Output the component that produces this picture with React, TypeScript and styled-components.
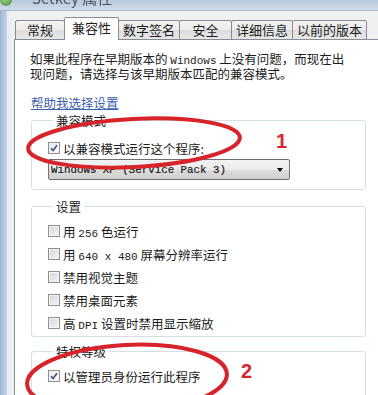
import React from 'react';
import styled, { createGlobalStyle } from 'styled-components';

const GlobalStyle = createGlobalStyle`
  html, body {
    margin: 0;
    padding: 0;
    background: #f0f0f0;
  }
  body {
    font-family: "Noto Sans CJK SC", "Noto Sans", sans-serif;
    color: #1e1e1e;
  }
`;

const tabs = [
  { label: '常规', width: 50 },
  { label: '兼容性', width: 55, active: true },
  { label: '数字签名', width: 62 },
  { label: '安全', width: 53 },
  { label: '详细信息', width: 62 },
  { label: '以前的版本', width: 75 },
];

const CheckIcon = () => (
  <svg width="8" height="8" viewBox="0 0 8 8">
    <path d="M1 4.2 L3.1 6.4 L7 1.2" fill="none" stroke="#3f5180" strokeWidth="1.6" />
  </svg>
);

const CheckRow = ({ checked, children }: { checked?: boolean; children: React.ReactNode }) => (
  <Row>
    <Box $checked={checked}>{checked && <CheckIcon />}</Box>
    <span>{children}</span>
  </Row>
);

const App = () => {
  return (
    <Window>
      <GlobalStyle />
      <TitleBar>
        <AppIcon />
        <Title>Setkey 属性</Title>
      </TitleBar>
      <Body>
        <Frame />
        <Dialog>
          <TabStrip>
            {tabs.map((t) => (
              <Tab key={t.label} $active={t.active} $width={t.width}>
                {t.label}
              </Tab>
            ))}
          </TabStrip>
          <Panel>
            <Intro>
              如果此程序在早期版本的 <Latin>Windows</Latin> 上没有问题，而现在出
              <br />
              现问题，请选择与该早期版本匹配的兼容模式。
            </Intro>
            <HelpLink>帮助我选择设置</HelpLink>

            <Group $top={13} $bottom={9} $gap={3} $space={5}>
              <legend>兼容模式</legend>
              <CheckRow checked>以兼容模式运行这个程序:</CheckRow>
              <Select>
                <SelectText>Windows XP (Service Pack 3)</SelectText>
                <Arrow />
              </Select>
            </Group>

            <Group $top={10} $bottom={5} $gap={7} $space={10}>
              <legend>设置</legend>
              <CheckRow>
                用 <Latin>256</Latin> 色运行
              </CheckRow>
              <CheckRow>
                用 <Latin>640 x 480</Latin> 屏幕分辨率运行
              </CheckRow>
              <CheckRow>禁用视觉主题</CheckRow>
              <CheckRow>禁用桌面元素</CheckRow>
              <CheckRow>
                高 <Latin>DPI</Latin> 设置时禁用显示缩放
              </CheckRow>
            </Group>

            <Group $top={10} $bottom={20} $gap={7} $space={8}>
              <legend>特权等级</legend>
              <CheckRow checked>以管理员身份运行此程序</CheckRow>
            </Group>
          </Panel>
        </Dialog>
      </Body>

      <Marks width="378" height="395" viewBox="0 0 378 395">
        <ellipse cx="134" cy="143" rx="106" ry="24" transform="rotate(-3 134 143)" />
        <ellipse cx="127" cy="379" rx="100" ry="34" transform="rotate(-3 127 379)" />
        <text x="276" y="148">1</text>
        <text x="241" y="378">2</text>
      </Marks>
    </Window>
  );
};

export default App;

const Window = styled.div`
  position: relative;
  width: 378px;
  height: 395px;
  overflow: hidden;
  display: flex;
  flex-direction: column;
  background: #f0f0f0;
`;

const TitleBar = styled.div`
  height: 10px;
  flex: none;
  display: flex;
  align-items: flex-start;
  gap: 20px;
  overflow: hidden;
  background: linear-gradient(180deg, #b8c9dc, #cfdbe8);
  border-bottom: 1px solid #a9b9cc;
`;

const AppIcon = styled.div`
  width: 12px;
  height: 12px;
  margin-top: -6px;
  border-radius: 50%;
  background: radial-gradient(circle at 40% 40%, #9fd38c, #3e8a3a);
`;

const Title = styled.div`
  font-size: 15px;
  line-height: 14px;
  margin-top: -9px;
  color: #4b5564;
  white-space: nowrap;
  filter: blur(0.7px);
`;

const Body = styled.div`
  flex: 1;
  display: flex;
  min-height: 0;
`;

const Frame = styled.div`
  width: 7px;
  flex: none;
  background: linear-gradient(90deg, #9db5d3, #c5d4e6);
  border-right: 2px solid #e6ecf3;
`;

const Dialog = styled.div`
  flex: 1;
  display: flex;
  flex-direction: column;
  padding: 7px 0 0 5px;
  overflow: hidden;
`;

const TabStrip = styled.div`
  display: flex;
  align-items: flex-end;
  height: 22px;
  padding-left: 1px;
  position: relative;
  z-index: 1;
  margin-bottom: -1px;
`;

const Tab = styled.div<{ $active?: boolean; $width: number }>`
  box-sizing: border-box;
  width: ${(p) => p.$width}px;
  height: ${(p) => (p.$active ? 23 : 20)}px;
  margin-right: -1px;
  display: flex;
  align-items: ${(p) => (p.$active ? 'flex-start' : 'center')};
  justify-content: center;
  padding-top: ${(p) => (p.$active ? 1 : 0)}px;
  font-size: 13px;
  line-height: 18px;
  color: #1e1e1e;
  border: 1px solid #898c95;
  border-bottom: ${(p) => (p.$active ? 'none' : '1px solid #898c95')};
  border-radius: 2px 2px 0 0;
  background: ${(p) =>
    p.$active ? '#ffffff' : 'linear-gradient(180deg, #f3f3f3 0%, #ebebeb 50%, #dedede 51%, #e6e6e6 100%)'};
  position: relative;
  z-index: ${(p) => (p.$active ? 2 : 1)};
`;

const Panel = styled.div`
  flex: 1;
  width: 380px;
  box-sizing: border-box;
  background: #ffffff;
  border: 1px solid #898c95;
  padding: 13px 0 0 16px;
  font-size: 12.5px;
`;

const Intro = styled.p`
  margin: 0 0 0 -1px;
  font-size: 12.5px;
  line-height: 12.5px;
  white-space: nowrap;
  color: #1c1c1c;
`;

const Latin = styled.span`
  font-family: "Liberation Mono", monospace;
  font-size: 11px;
`;

const HelpLink = styled.a`
  display: block;
  width: fit-content;
  margin-top: 16px;
  font-size: 12.5px;
  line-height: 13px;
  color: #3b5fae;
  text-decoration: underline;
  text-underline-offset: 1px;
`;

const Group = styled.fieldset<{ $top: number; $bottom: number; $gap: number; $space: number }>`
  box-sizing: border-box;
  width: 335px;
  min-width: 0;
  margin: ${(p) => p.$space}px 0 0 0;
  padding: ${(p) => p.$top}px 0 ${(p) => p.$bottom}px 16px;
  border: 1px solid #d5dfe5;
  border-radius: 3px;
  display: flex;
  flex-direction: column;
  gap: ${(p) => p.$gap}px;

  legend {
    margin-left: 5px;
    padding: 0 3px;
    font-size: 12.5px;
    line-height: 13px;
    color: #1e1e1e;
  }
`;

const Row = styled.div`
  display: flex;
  align-items: center;
  gap: 3px;
  height: 16px;
  font-size: 12.5px;
  white-space: nowrap;
  color: #1c1c1c;
`;

const Box = styled.span<{ $checked?: boolean }>`
  box-sizing: border-box;
  width: 12px;
  height: 12px;
  flex: none;
  display: flex;
  align-items: center;
  justify-content: center;
  border: 1px solid #8e8f8f;
  background: ${(p) =>
    p.$checked
      ? 'linear-gradient(135deg, #e4e8ee, #ffffff)'
      : 'linear-gradient(135deg, #d6d6d6, #f4f4f4)'};
  box-shadow: inset 0 0 0 1px #f4f4f4;
`;

const Select = styled.div`
  box-sizing: border-box;
  width: 242px;
  height: 21px;
  display: flex;
  align-items: center;
  justify-content: space-between;
  padding: 0 6px 0 2px;
  border: 1px solid #707070;
  border-radius: 2px;
  background: linear-gradient(180deg, #f2f2f2 0%, #ebebeb 50%, #dddddd 51%, #cfcfcf 100%);
`;

const SelectText = styled.span`
  font-family: "Liberation Mono", monospace;
  font-size: 10.8px;
  color: #1a1a1a;
  -webkit-text-stroke: 0.2px #1a1a1a;
`;

const Arrow = styled.span`
  width: 0;
  height: 0;
  border-left: 3.5px solid transparent;
  border-right: 3.5px solid transparent;
  border-top: 4px solid #000000;
`;

const Marks = styled.svg`
  position: absolute;
  left: 0;
  top: 0;
  pointer-events: none;

  ellipse {
    fill: none;
    stroke: #d7242b;
    stroke-width: 4;
  }
  text {
    fill: #d7242b;
    font-family: "Liberation Sans", Arial, sans-serif;
    font-weight: bold;
    font-size: 20px;
  }
`;
